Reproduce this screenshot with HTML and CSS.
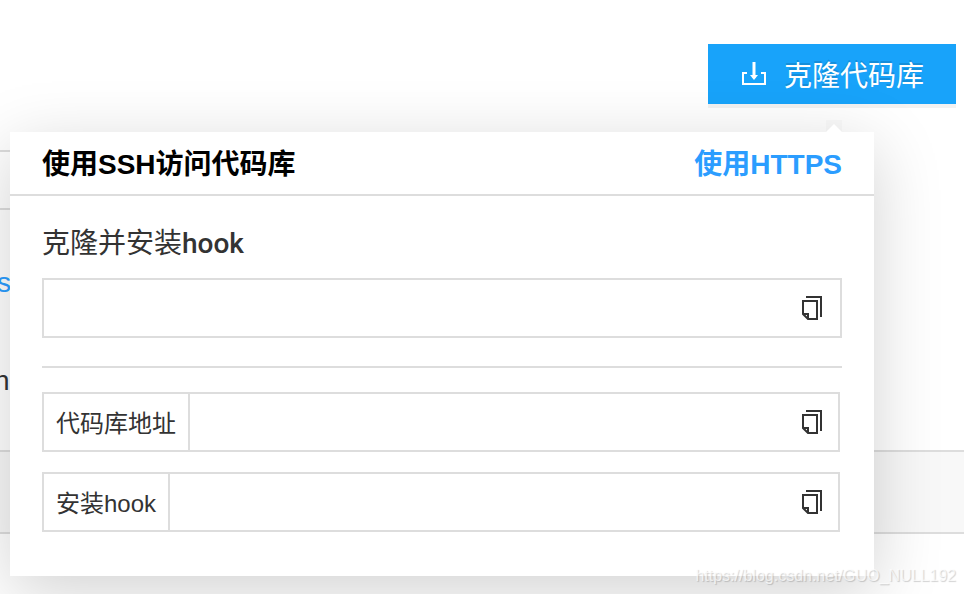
FILE: index.html
```html
<!DOCTYPE html>
<html lang="zh-CN">
  <head>
    <meta charset="UTF-8" />
    <meta name="viewport" content="width=device-width, initial-scale=1.0" />
    <title>克隆代码库</title>
    <link rel="stylesheet" href="styles.css" />
  </head>
  <body>
    <svg class="sprite" aria-hidden="true">
      <symbol id="icon-copy" viewBox="0 0 20 24">
        <path d="M4 1H19V21" fill="none" stroke="#333" stroke-width="2" />
        <path d="M1 5H15V23H6L1 18Z" fill="#fff" stroke="#333" stroke-width="2" />
        <path d="M1 18H6V23" fill="none" stroke="#333" stroke-width="2" />
      </symbol>
    </svg>

    <div class="page">
      <!-- Toolbar -->
      <div class="toolbar">
        <div class="clone">
          <button class="clone-btn" type="button">
            <svg class="clone-icon" viewBox="0 0 24 24" aria-hidden="true">
              <path d="M5 11H1V22H23V11H19" fill="none" stroke="#fff" stroke-width="2" />
              <path d="M12 0V16" fill="none" stroke="#fff" stroke-width="3" />
              <path d="M8 13H16L12 18Z" fill="#fff" />
            </svg>
            克隆代码库
          </button>
        </div>
      </div>

      <!-- File list -->
      <div class="branch-bar"></div>
      <div class="row"><a href="#">s</a></div>
      <div class="row">n</div>
      <div class="row-head"></div>

      <!-- Clone panel -->
      <div class="popover">
        <div class="popover-head">
          <h3>使用SSH访问代码库</h3>
          <a href="#">使用HTTPS</a>
        </div>
        <div class="popover-body">
          <label class="title" for="cloneHook">克隆并安装<span class="latin">hook</span></label>
          <div class="field">
            <input type="text" id="cloneHook" />
            <button class="copy" type="button" aria-label="复制">
              <svg><use href="#icon-copy" /></svg>
            </button>
          </div>
          <hr />
          <div class="field field-group">
            <label for="repoUrl">代码库地址</label>
            <input type="text" id="repoUrl" />
            <button class="copy" type="button" aria-label="复制">
              <svg><use href="#icon-copy" /></svg>
            </button>
          </div>
          <div class="field field-group">
            <label for="hook">安装hook</label>
            <input type="text" id="hook" />
            <button class="copy" type="button" aria-label="复制">
              <svg><use href="#icon-copy" /></svg>
            </button>
          </div>
        </div>
      </div>

      <div class="watermark">https://blog.csdn.net/GUO_NULL192</div>
    </div>
  </body>
</html>
```

FILE: styles.css
```css
* {
  box-sizing: border-box;
}

body {
  margin: 0;
  font-family: "Liberation Sans", "Noto Sans CJK SC", sans-serif;
  font-size: 24px;
  color: #333;
  background: #fff;
}

a {
  color: #2b9dff;
  text-decoration: none;
}

button,
input {
  font-family: inherit;
  border: none;
  outline: none;
}

button {
  cursor: pointer;
}

.sprite {
  display: none;
}

.page {
  position: relative;
  min-height: 100vh;
  overflow: hidden;
}

/* Toolbar */
.toolbar {
  display: flex;
  justify-content: flex-end;
  padding: 44px 8px 46px;
}

.clone-btn {
  display: flex;
  align-items: center;
  gap: 18px;
  height: 60px;
  padding: 0 32px 0 34px;
  font-size: 28px;
  color: #fff;
  background: #18a3fa;
  box-shadow: 0 4px 0 rgba(0, 0, 0, 0.05);
  text-shadow: 0 -2px 0 rgba(0, 0, 0, 0.12);
}

.clone-icon {
  width: 24px;
  height: 24px;
}

/* File list */
.branch-bar {
  width: 50%;
  height: 60px;
  border: 2px solid #ddd;
  border-left: none;
}

.row {
  height: 98px;
  margin-left: -6px;
  padding-top: 24px;
  font-size: 28px;
  line-height: 98px;
}

.row a {
  padding-left: 3px;
}

.row + .row {
  height: 142px;
}

.row-head {
  height: 84px;
  background: #f8f8f8;
  border-top: 2px solid #ddd;
  border-bottom: 2px solid #ddd;
}

/* Clone panel */
.popover {
  position: absolute;
  top: 132px;
  left: 10px;
  right: 90px;
  background: #fff;
  box-shadow: 0 16px 64px rgba(0, 0, 0, 0.18);
}

.popover::before {
  content: "";
  position: absolute;
  right: 32px;
  bottom: 100%;
  border: 8px solid transparent;
  border-top-width: 4px;
  border-bottom-color: #fff;
  background: rgba(0, 0, 0, 0.02);
}

.popover-head {
  display: flex;
  justify-content: space-between;
  padding: 4px 32px 0;
  font-size: 28px;
  font-weight: bold;
  line-height: 58px;
  border-bottom: 2px solid #ddd;
}

.popover-head h3 {
  margin: 0;
  font-size: 28px;
  color: #000;
}

.popover-body {
  padding: 28px 32px 44px;
}

.title {
  display: block;
  margin-bottom: 14px;
  font-size: 28px;
  line-height: 40px;
}

.title .latin {
  font-family: Roboto, sans-serif;
  font-weight: 500;
}

.field {
  display: flex;
  height: 60px;
  border: 2px solid #ddd;
}

.field input {
  flex: 1;
  min-width: 0;
  padding: 0 12px;
  font-size: 24px;
  background: none;
}

.field-group {
  margin-right: 2px;
}

.field-group + .field-group {
  margin-top: 20px;
}

.field-group label {
  padding: 0 12px;
  line-height: 60px;
  border-right: 2px solid #ddd;
}

.copy {
  display: flex;
  align-items: center;
  padding: 0 18px;
  background: none;
}

.field-group .copy {
  padding-right: 16px;
}

.copy svg {
  width: 20px;
  height: 24px;
}

hr {
  height: 2px;
  margin: 28px 0 24px;
  border: none;
  background: #ddd;
}

.watermark {
  position: absolute;
  right: 8px;
  bottom: 8px;
  font-size: 16px;
  line-height: 20px;
  color: rgba(255, 255, 255, 0.7);
  text-shadow: 1px 1px 1px rgba(0, 0, 0, 0.18);
}
```
